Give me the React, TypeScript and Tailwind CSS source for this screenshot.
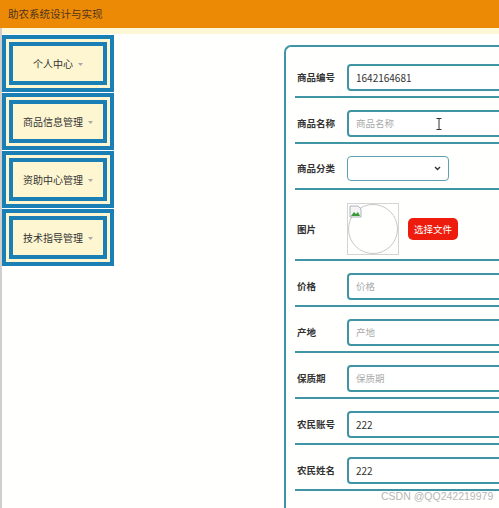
const menus = ["个人中心", "商品信息管理", "资助中心管理", "技术指导管理"];

type Row =
  | { label: string; kind: "input"; value?: string; placeholder?: string; cursor?: boolean }
  | { label: string; kind: "select" }
  | { label: string; kind: "image" };

const rows: Row[] = [
  { label: "商品编号", kind: "input", value: "1642164681" },
  { label: "商品名称", kind: "input", placeholder: "商品名称", cursor: true },
  { label: "商品分类", kind: "select" },
  { label: "图片", kind: "image" },
  { label: "价格", kind: "input", placeholder: "价格" },
  { label: "产地", kind: "input", placeholder: "产地" },
  { label: "保质期", kind: "input", placeholder: "保质期" },
  { label: "农民账号", kind: "input", value: "222" },
  { label: "农民姓名", kind: "input", value: "222" },
];

function MenuItem({ title }: { title: string }) {
  return (
    <div className="h-[57px] w-[112px] border-4 border-[#1a7fb4] bg-[#fdf6d0] p-[3px] mb-[1px]">
      <div className="h-full border-4 border-[#1a7fb4] bg-[#fdf6d0] flex items-center justify-center gap-[5px] text-[10px] text-[#333]">
        <span>{title}</span>
        <svg width="5" height="3" viewBox="0 0 5 3" className="mt-[1px]">
          <path d="M0 0 L5 0 L2.5 3 Z" fill="#aaa" />
        </svg>
      </div>
    </div>
  );
}

function Field({ row }: { row: Row }) {
  if (row.kind === "select") {
    return (
      <div className="h-[25px] w-[102px] border border-[#5aa2ae] rounded-[4px] bg-white flex items-center justify-end pr-[7px]">
        <svg width="7" height="5" viewBox="0 0 7 5">
          <path d="M1 1 L3.5 3.5 L6 1" stroke="#333" strokeWidth="1.4" fill="none" />
        </svg>
      </div>
    );
  }
  if (row.kind === "image") {
    return (
      <div className="flex items-center gap-[9px]">
        <div className="relative w-[52px] h-[52px] border border-[#d4d4d4]">
          <div className="w-full h-full rounded-full border border-[#c8c8c8]" />
          <svg width="13" height="13" viewBox="0 0 13 13" className="absolute left-[1px] top-[1px]">
            <path d="M1 1 H9 L12 4 V12 H1 Z" fill="#f4f4f4" stroke="#9aa6b0" strokeWidth="0.8" />
            <path d="M2 11 L5 7 L7 9 L9 7 L11 11 Z" fill="#3c9a3c" />
          </svg>
        </div>
        <div className="h-[22px] w-[50px] rounded-[5px] bg-[#ee1c0c] text-white text-[9.5px] flex items-center justify-center">
          选择文件
        </div>
      </div>
    );
  }
  return (
    <div className="relative h-[27px] w-[170px] border-2 border-[#3f95a4] rounded-[4px] bg-white flex items-center pl-[7px] text-[10px]">
      {row.value ? (
        <span className="text-[#333]">{row.value}</span>
      ) : (
        <span className="text-[#aaa] text-[9.5px]">{row.placeholder}</span>
      )}
      {row.cursor && (
        <svg width="6" height="12" viewBox="0 0 6 12" className="absolute left-[87px] top-[6px]">
          <path d="M0.5 0.5 H5.5 M3 0.5 V11.5 M0.5 11.5 H5.5" stroke="#333" strokeWidth="1" fill="none" />
        </svg>
      )}
    </div>
  );
}

function rowPad(kind: Row["kind"]) {
  if (kind === "select") return "pt-[12px] pb-[7px]";
  if (kind === "image") return "pt-[13px] pb-[4px]";
  return "pt-[12px] pb-[5px]";
}

export default function App() {
  return (
    <div
      className="relative w-[499px] h-[508px] overflow-hidden bg-[#fffffd] flex flex-col"
      style={{ fontFamily: '"Noto Sans CJK SC", "Noto Sans", sans-serif' }}
    >
      <header className="h-[28px] shrink-0 bg-[#ec8a05] flex items-center pl-[8px] text-[10.5px] text-[#4f3420]">
        助农系统设计与实现
      </header>
      <div className="h-[6px] shrink-0 bg-[#fdf7d6] border-l-2 border-[#cfcfcf]" />
      <div className="flex-1 flex border-l-2 border-[#cfcfcf]">
        <aside className="w-[112px] shrink-0 pt-[1px]">
          {menus.map((m) => (
            <MenuItem key={m} title={m} />
          ))}
        </aside>
        <main className="flex-1 pl-[170px] pt-[11px]">
          <div className="w-[260px] h-[520px] border-2 border-r-0 border-b-0 border-[#3f95a4] rounded-tl-[7px] pt-[5px] pl-[9px]">
            {rows.map((r) => (
              <div
                key={r.label}
                className={`flex items-center border-b-2 border-[#3f95a4] ${rowPad(r.kind)}`}
              >
                <div className="w-[52px] pl-[2px] text-[9.5px] font-bold text-[#333]">{r.label}</div>
                <Field row={r} />
              </div>
            ))}
          </div>
        </main>
      </div>
      <div
        className="absolute left-[381px] top-[490px] whitespace-nowrap text-[10.5px] leading-[13px] text-[#b8b8b8]"
        style={{ fontFamily: '"Liberation Sans", Arial, sans-serif' }}
      >
        CSDN @QQ242219979
      </div>
    </div>
  );
}
